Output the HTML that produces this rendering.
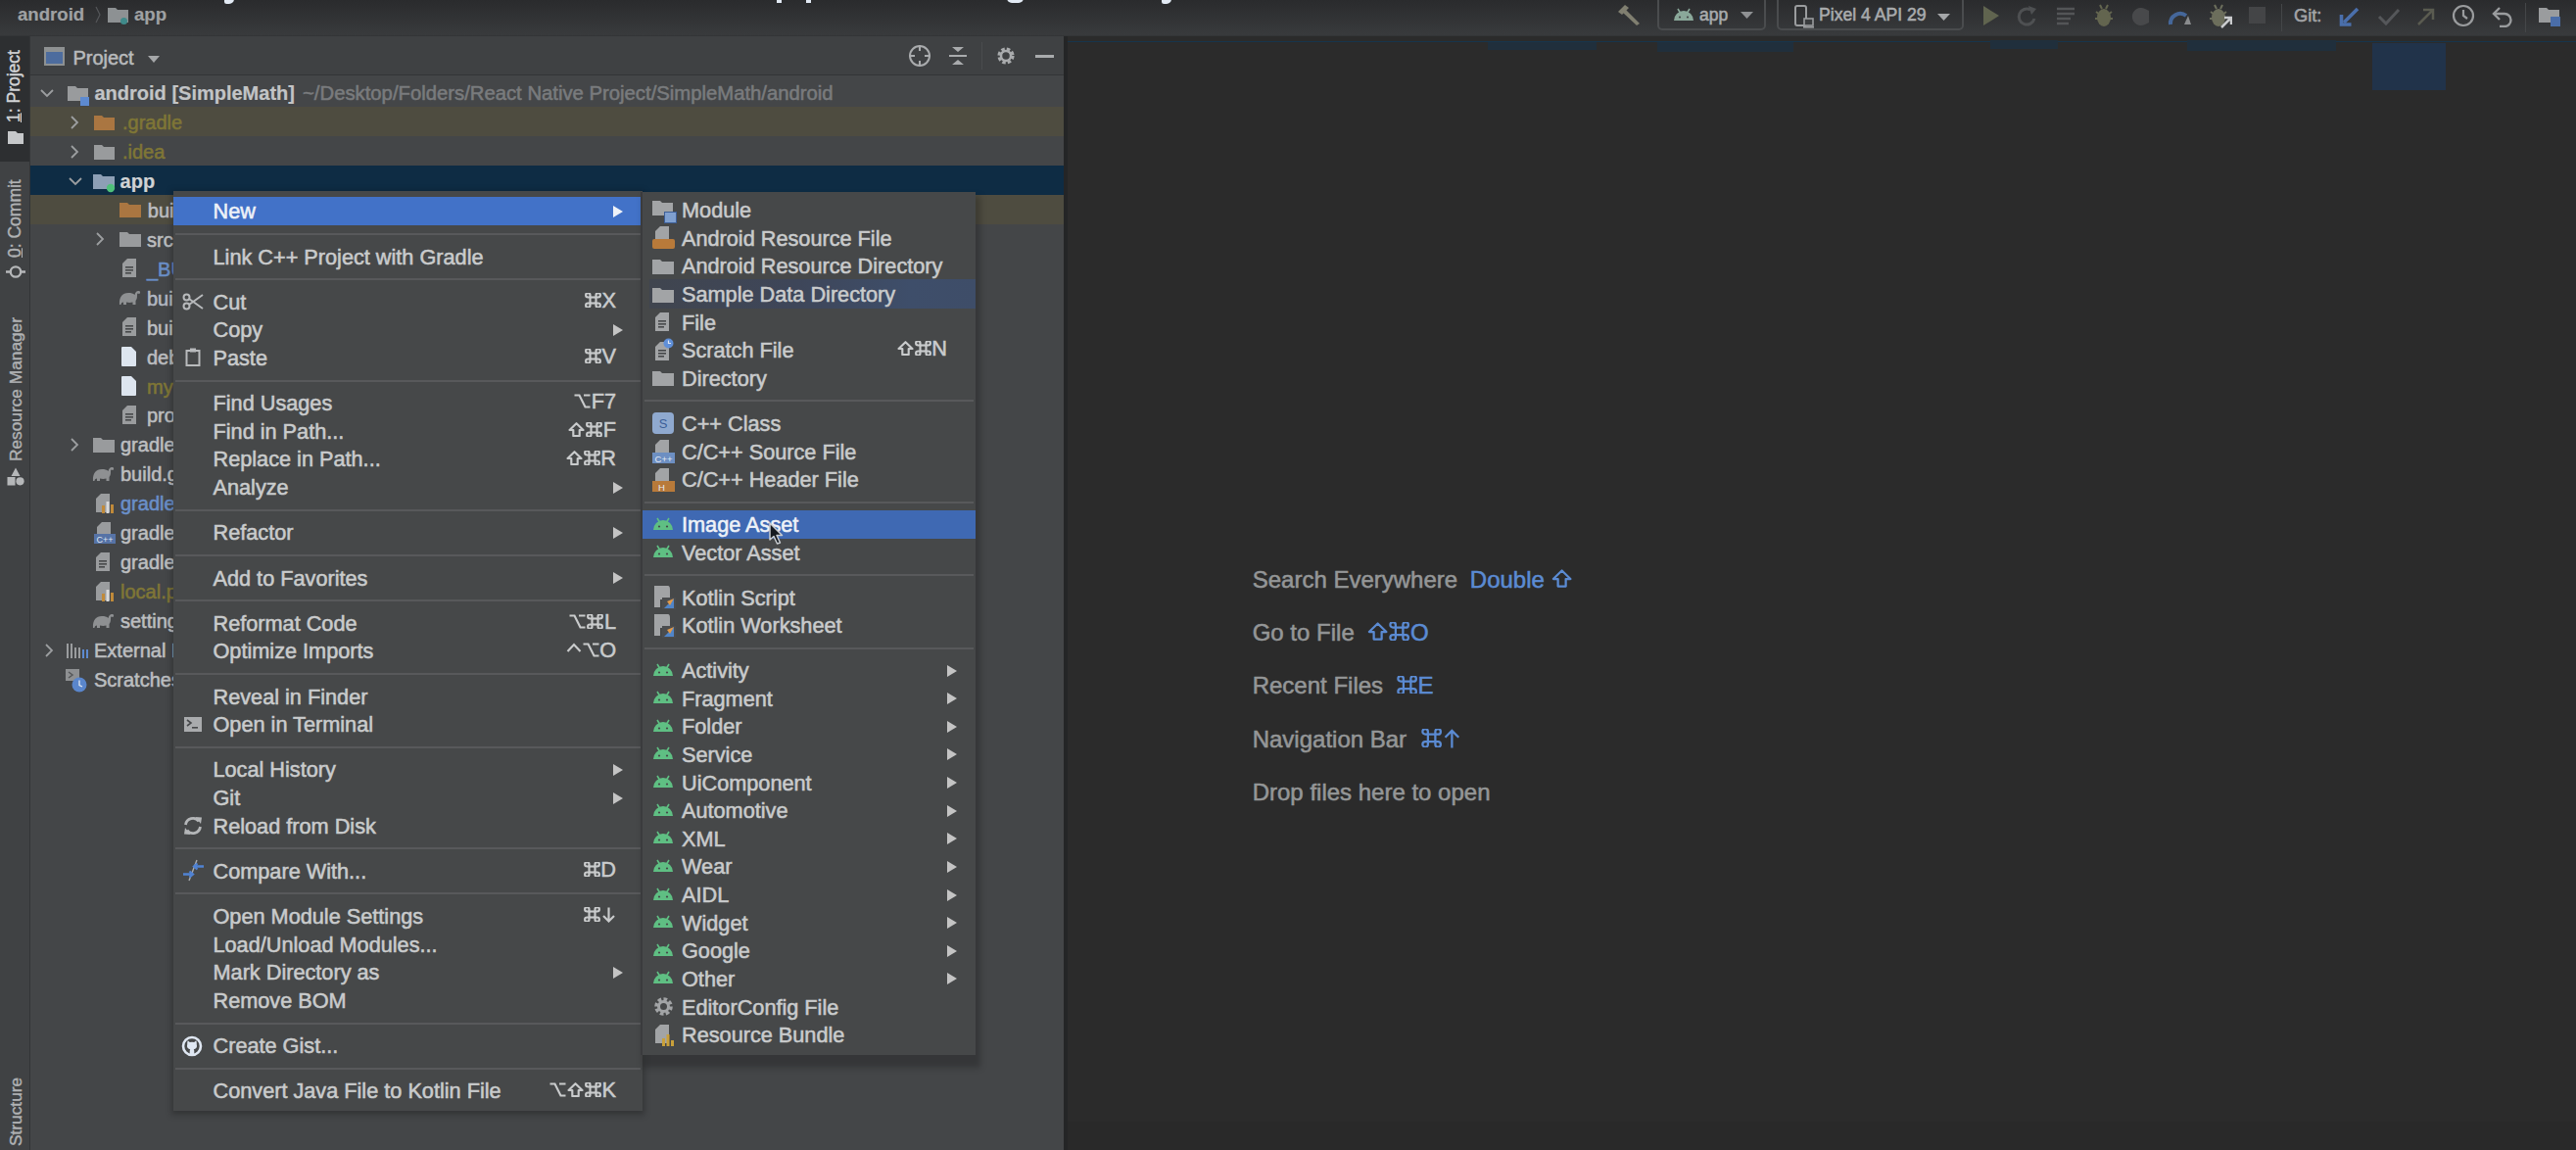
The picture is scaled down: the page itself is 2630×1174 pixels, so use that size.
<!DOCTYPE html>
<html><head><meta charset="utf-8"><style>
html,body{margin:0;padding:0;width:2630px;height:1174px;overflow:hidden;background:#2b2b2b}
body{position:relative;font-family:"Liberation Sans", sans-serif}
</style></head><body>
<div style="position:absolute;left:0;top:0;width:2630px;height:1174px;background:#2b2b2b"></div><div style="position:absolute;left:0px;top:0px;width:2630px;height:37px;background:linear-gradient(#2a2b2d,#393b3d);"></div><div style="position:absolute;left:0px;top:36px;width:2630px;height:1px;background:#333537;"></div><div style="position:absolute;left:229px;top:-1px;width:9.5px;height:4.5px;background:#e2eaf4;border-radius:0 0 6px 3px"></div><div style="position:absolute;left:792.5px;top:0px;width:5.7px;height:3px;background:#e2eaf4;"></div><div style="position:absolute;left:822.5px;top:0px;width:5.5px;height:3px;background:#e2eaf4;"></div><div style="position:absolute;left:1028px;top:-2px;width:17px;height:5px;background:#e2eaf4;border-radius:0 0 9px 9px"></div><div style="position:absolute;left:1186px;top:-1px;width:9.5px;height:4.5px;background:#e2eaf4;border-radius:0 0 6px 3px"></div><div style="position:absolute;left:18px;top:6.03px;font-size:18.6px;line-height:18.6px;color:#9fa1a3;font-weight:bold;white-space:pre;-webkit-text-stroke:0.2px #9fa1a3;">android</div><svg style="position:absolute;left:96px;top:6px;" width="8" height="18" viewBox="0 0 8 18"><path d="M2 1 L6 9 L2 17" stroke="#55575a" stroke-width="1.2" fill="none"/></svg><svg style="position:absolute;left:110px;top:7px;" width="21" height="16" viewBox="0 0 21 16"><path d="M0 1 H8 L10 3 H21 V16 H0 Z" fill="#8d9193"/></svg><svg style="position:absolute;left:122px;top:17px;" width="9" height="9" viewBox="0 0 9 9"><circle cx="4.5" cy="4.5" r="3.5" fill="#3f8a8a"/></svg><div style="position:absolute;left:137px;top:6.03px;font-size:18.6px;line-height:18.6px;color:#9fa1a3;font-weight:bold;white-space:pre;-webkit-text-stroke:0.2px #9fa1a3;">app</div><div style="position:absolute;left:0px;top:37px;width:30px;height:1137px;background:#404244;"></div><div style="position:absolute;left:0px;top:37px;width:30px;height:128px;background:#2d2f31;"></div><div style="position:absolute;left:30px;top:37px;width:1px;height:1137px;background:#333537;"></div><div style="position:absolute;left:6px;top:125px;transform-origin:0 0;transform:rotate(-90deg);font-size:17.5px;line-height:17.5px;color:#d2d4d6;font-weight:normal;white-space:pre;-webkit-text-stroke:0.4px #d2d4d6"><u>1</u>: Project</div><svg style="position:absolute;left:8px;top:133px;" width="16" height="14" viewBox="0 0 16 14"><path d="M0 1 H8 L10 3 H16 V14 H0 Z" fill="#c6c8ca"/></svg><div style="position:absolute;left:7px;top:263px;transform-origin:0 0;transform:rotate(-90deg);font-size:17.5px;line-height:17.5px;color:#b0b2b4;font-weight:normal;white-space:pre;-webkit-text-stroke:0.4px #b0b2b4"><u>0</u>: Commit</div><svg style="position:absolute;left:5px;top:270px;" width="22" height="15" viewBox="0 0 22 15"><circle cx="11" cy="7.5" r="5.2" stroke="#b5b7b9" stroke-width="2.3" fill="none"/><path d="M1 7.5 H5.5 M16.5 7.5 H21" stroke="#b5b7b9" stroke-width="2.6"/></svg><div style="position:absolute;left:7.5px;top:470.5px;transform-origin:0 0;transform:rotate(-90deg);font-size:17.3px;line-height:17.3px;color:#b0b2b4;font-weight:normal;white-space:pre;-webkit-text-stroke:0.4px #b0b2b4">Resource Manager</div><svg style="position:absolute;left:7px;top:477px;" width="18" height="19" viewBox="0 0 18 19"><path d="M9 0.5 L13.5 9 H4.5 Z" fill="#b5b7b9"/><rect x="0.5" y="10" width="8" height="8.5" fill="#b5b7b9"/><circle cx="13.5" cy="14.3" r="4.1" fill="#b5b7b9"/></svg><div style="position:absolute;left:7.5px;top:1170px;transform-origin:0 0;transform:rotate(-90deg);font-size:17.3px;line-height:17.3px;color:#b0b2b4;font-weight:normal;white-space:pre;-webkit-text-stroke:0.4px #b0b2b4">Structure</div><div style="position:absolute;left:31px;top:37px;width:1056px;height:1137px;background:#444648;"></div><div style="position:absolute;left:31px;top:37px;width:1056px;height:39px;background:#3f4143;"></div><div style="position:absolute;left:31px;top:76px;width:1056px;height:1px;background:#333537;"></div><svg style="position:absolute;left:45px;top:48px;" width="21" height="19" viewBox="0 0 21 19"><rect x="1" y="1" width="19" height="17" fill="#4d6c9e" stroke="#8e9192" stroke-width="2"/><rect x="1" y="1" width="19" height="4" fill="#8e9192"/></svg><div style="position:absolute;left:74.4px;top:48.55px;font-size:20px;line-height:20px;color:#b8babc;font-weight:normal;white-space:pre;-webkit-text-stroke:0.55px #b8babc;">Project</div><svg style="position:absolute;left:151px;top:57px;" width="12" height="7" viewBox="0 0 12 7"><path d="M0 0 H12 L6 7 Z" fill="#a5a7a9"/></svg><svg style="position:absolute;left:927px;top:45px;" width="24" height="24" viewBox="0 0 24 24"><circle cx="12" cy="12" r="10" stroke="#a9abad" stroke-width="2" fill="none"/><path d="M12 1 V7 M12 17 V23 M1 12 H7 M17 12 H23" stroke="#a9abad" stroke-width="2"/></svg><svg style="position:absolute;left:968px;top:47px;" width="20" height="20" viewBox="0 0 20 20"><path d="M4 1 H16 L10 6 Z M4 19 H16 L10 14 Z" fill="#a9abad"/><rect x="1" y="9" width="18" height="2" fill="#a9abad"/></svg><div style="position:absolute;left:1002px;top:43px;width:1px;height:28px;background:#4a4c4e;"></div><svg style="position:absolute;left:1017px;top:47px;" width="20" height="20" viewBox="0 0 20 20"><circle cx="10" cy="10" r="6.5" fill="none" stroke="#a9abad" stroke-width="4.2" stroke-dasharray="3.2 1.9"/><circle cx="10" cy="10" r="5" fill="none" stroke="#a9abad" stroke-width="2.5"/></svg><div style="position:absolute;left:1057px;top:56px;width:19px;height:2.5px;background:#a9abad;"></div><div style="position:absolute;left:31px;top:108.85000000000001px;width:1055px;height:29.95px;background:#4e4c40;"></div><div style="position:absolute;left:31px;top:168.75px;width:1056px;height:29.95px;background:#0e2c44;"></div><div style="position:absolute;left:31px;top:198.7px;width:1056px;height:29.95px;background:#4e4c40;"></div><svg style="position:absolute;left:41px;top:89.675px;" width="14" height="10" viewBox="0 0 14 10"><path d="M1 2 L7 8 L13 2" stroke="#9c9ea0" stroke-width="1.8" fill="none"/></svg><svg style="position:absolute;left:69px;top:86.675px;" width="21" height="16" viewBox="0 0 21 16"><path d="M0 1 H8 L10 3 H21 V16 H0 Z" fill="#999b9d"/></svg><div style="position:absolute;left:82px;top:98.675px;width:9px;height:9px;background:#5d8ad0;"></div><div style="position:absolute;left:96.5px;top:85.03px;font-size:20px;line-height:20px;color:#c2c4c6;font-weight:bold;white-space:pre;-webkit-text-stroke:0.2px #c2c4c6;">android [SimpleMath]</div><div style="position:absolute;left:309px;top:84.89px;font-size:20.3px;line-height:20.3px;color:#797b7d;font-weight:normal;white-space:pre;-webkit-text-stroke:0.55px #797b7d;">~/Desktop/Folders/React Native Project/SimpleMath/android</div><svg style="position:absolute;left:71px;top:117.625px;" width="10" height="14" viewBox="0 0 10 14"><path d="M2 1 L8 7 L2 13" stroke="#9c9ea0" stroke-width="1.8" fill="none"/></svg><svg style="position:absolute;left:96px;top:116.625px;" width="21" height="16" viewBox="0 0 21 16"><path d="M0 1 H8 L10 3 H21 V16 H0 Z" fill="#aa7641"/></svg><div style="position:absolute;left:125px;top:114.98px;font-size:20px;line-height:20px;color:#7f7636;font-weight:normal;white-space:pre;-webkit-text-stroke:0.55px #7f7636;">.gradle</div><svg style="position:absolute;left:71px;top:147.57500000000002px;" width="10" height="14" viewBox="0 0 10 14"><path d="M2 1 L8 7 L2 13" stroke="#9c9ea0" stroke-width="1.8" fill="none"/></svg><svg style="position:absolute;left:96px;top:146.57500000000002px;" width="21" height="16" viewBox="0 0 21 16"><path d="M0 1 H8 L10 3 H21 V16 H0 Z" fill="#999b9d"/></svg><div style="position:absolute;left:125px;top:144.94px;font-size:20px;line-height:20px;color:#7f7636;font-weight:normal;white-space:pre;-webkit-text-stroke:0.55px #7f7636;">.idea</div><svg style="position:absolute;left:70px;top:179.525px;" width="14" height="10" viewBox="0 0 14 10"><path d="M1 2 L7 8 L13 2" stroke="#9c9ea0" stroke-width="1.8" fill="none"/></svg><svg style="position:absolute;left:95px;top:176.525px;" width="22" height="16" viewBox="0 0 22 16"><path d="M0 1 H8 L10 3 H22 V16 H0 Z" fill="#8d9fb5"/></svg><svg style="position:absolute;left:108px;top:186.525px;" width="10" height="10" viewBox="0 0 10 10"><circle cx="5" cy="5" r="4.2" fill="#4fc07a"/></svg><div style="position:absolute;left:122.6px;top:174.89px;font-size:20px;line-height:20px;color:#d0d2d4;font-weight:bold;white-space:pre;-webkit-text-stroke:0.2px #d0d2d4;">app</div><svg style="position:absolute;left:122px;top:206.475px;" width="22" height="16" viewBox="0 0 22 16"><path d="M0 1 H8 L10 3 H22 V16 H0 Z" fill="#aa7641"/></svg><div style="position:absolute;left:150.8px;top:204.84px;font-size:20px;line-height:20px;color:#bcbec0;font-weight:normal;white-space:pre;-webkit-text-stroke:0.55px #bcbec0;">build</div><svg style="position:absolute;left:97px;top:237.425px;" width="10" height="14" viewBox="0 0 10 14"><path d="M2 1 L8 7 L2 13" stroke="#9c9ea0" stroke-width="1.8" fill="none"/></svg><svg style="position:absolute;left:122px;top:236.425px;" width="22" height="16" viewBox="0 0 22 16"><path d="M0 1 H8 L10 3 H22 V16 H0 Z" fill="#999b9d"/></svg><div style="position:absolute;left:150px;top:234.79px;font-size:20px;line-height:20px;color:#bcbec0;font-weight:normal;white-space:pre;-webkit-text-stroke:0.55px #bcbec0;">src</div><svg style="position:absolute;left:125px;top:264.37500000000006px;" width="14" height="19" viewBox="0 0 14 19"><path d="M0 5 L5 0 H14 V19 H0 Z" fill="#9a9c9e"/><rect x="3" y="8" width="8" height="1.6" fill="#46484a"/><rect x="3" y="11" width="8" height="1.6" fill="#46484a"/><rect x="3" y="14" width="6" height="1.6" fill="#46484a"/></svg><div style="position:absolute;left:150px;top:264.74px;font-size:20px;line-height:20px;color:#6a8fc8;font-weight:normal;white-space:pre;-webkit-text-stroke:0.55px #6a8fc8;">_BUCK</div><svg style="position:absolute;left:121px;top:296.32500000000005px;" width="23" height="16" viewBox="0 0 23 16"><path d="M1 15 C0.5 7 4 3 10 3 C13 3 15 3.5 16.5 5 C17 2.5 18.5 0.5 21 1 C22.5 1.5 22.5 3.5 21 4 C20 3 19 3.2 19 5 C19.2 8 18.5 10 17.5 11 L17.5 15 H14.5 V12.5 C12.5 13 10 13 8 12.5 V15 H5 V12.5 C3.5 12.5 2.5 13.5 2.5 15 Z" fill="#8e9092"/></svg><div style="position:absolute;left:150px;top:294.69px;font-size:20px;line-height:20px;color:#b2b8c2;font-weight:normal;white-space:pre;-webkit-text-stroke:0.55px #b2b8c2;">build.gradle</div><svg style="position:absolute;left:125px;top:324.27500000000003px;" width="14" height="19" viewBox="0 0 14 19"><path d="M0 5 L5 0 H14 V19 H0 Z" fill="#9a9c9e"/><rect x="3" y="8" width="8" height="1.6" fill="#46484a"/><rect x="3" y="11" width="8" height="1.6" fill="#46484a"/><rect x="3" y="14" width="6" height="1.6" fill="#46484a"/></svg><div style="position:absolute;left:150px;top:324.63px;font-size:20px;line-height:20px;color:#bcbec0;font-weight:normal;white-space:pre;-webkit-text-stroke:0.55px #bcbec0;">build_defs.bzl</div><svg style="position:absolute;left:124px;top:354.2250000000001px;" width="15" height="20" viewBox="0 0 15 20"><path d="M1 0 H10 L15 5 V19 Q15 20 14 20 H1 Q0 20 0 19 V1 Q0 0 1 0 Z" fill="#dde5ef"/></svg><div style="position:absolute;left:150px;top:354.59px;font-size:20px;line-height:20px;color:#bcbec0;font-weight:normal;white-space:pre;-webkit-text-stroke:0.55px #bcbec0;">debug.keystore</div><svg style="position:absolute;left:124px;top:384.175px;" width="15" height="20" viewBox="0 0 15 20"><path d="M1 0 H10 L15 5 V19 Q15 20 14 20 H1 Q0 20 0 19 V1 Q0 0 1 0 Z" fill="#dde5ef"/></svg><div style="position:absolute;left:150px;top:384.53px;font-size:20px;line-height:20px;color:#7f7636;font-weight:normal;white-space:pre;-webkit-text-stroke:0.55px #7f7636;">my-upload-key</div><svg style="position:absolute;left:125px;top:414.12500000000006px;" width="14" height="19" viewBox="0 0 14 19"><path d="M0 5 L5 0 H14 V19 H0 Z" fill="#9a9c9e"/><rect x="3" y="8" width="8" height="1.6" fill="#46484a"/><rect x="3" y="11" width="8" height="1.6" fill="#46484a"/><rect x="3" y="14" width="6" height="1.6" fill="#46484a"/></svg><div style="position:absolute;left:150px;top:414.49px;font-size:20px;line-height:20px;color:#bcbec0;font-weight:normal;white-space:pre;-webkit-text-stroke:0.55px #bcbec0;">proguard-rules.pro</div><svg style="position:absolute;left:71px;top:447.075px;" width="10" height="14" viewBox="0 0 10 14"><path d="M2 1 L8 7 L2 13" stroke="#9c9ea0" stroke-width="1.8" fill="none"/></svg><svg style="position:absolute;left:95px;top:446.075px;" width="22" height="16" viewBox="0 0 22 16"><path d="M0 1 H8 L10 3 H22 V16 H0 Z" fill="#999b9d"/></svg><div style="position:absolute;left:123px;top:444.43px;font-size:20px;line-height:20px;color:#bcbec0;font-weight:normal;white-space:pre;-webkit-text-stroke:0.55px #bcbec0;">gradle</div><svg style="position:absolute;left:94px;top:476.02500000000003px;" width="23" height="16" viewBox="0 0 23 16"><path d="M1 15 C0.5 7 4 3 10 3 C13 3 15 3.5 16.5 5 C17 2.5 18.5 0.5 21 1 C22.5 1.5 22.5 3.5 21 4 C20 3 19 3.2 19 5 C19.2 8 18.5 10 17.5 11 L17.5 15 H14.5 V12.5 C12.5 13 10 13 8 12.5 V15 H5 V12.5 C3.5 12.5 2.5 13.5 2.5 15 Z" fill="#8e9092"/></svg><div style="position:absolute;left:123px;top:474.38px;font-size:20px;line-height:20px;color:#bcbec0;font-weight:normal;white-space:pre;-webkit-text-stroke:0.55px #bcbec0;">build.gradle</div><svg style="position:absolute;left:98px;top:503.975px;" width="14" height="19" viewBox="0 0 14 19"><path d="M0 5 L5 0 H14 V19 H0 Z" fill="#9a9c9e"/></svg><svg style="position:absolute;left:104px;top:511.975px;" width="13" height="12" viewBox="0 0 13 12"><rect x="0" y="4" width="3" height="8" fill="#c08a3a"/><rect x="4.5" y="0" width="3" height="12" fill="#d9d9d9"/><rect x="9" y="3" width="3" height="9" fill="#c08a3a"/></svg><div style="position:absolute;left:123px;top:504.33px;font-size:20px;line-height:20px;color:#6a8fc8;font-weight:normal;white-space:pre;-webkit-text-stroke:0.55px #6a8fc8;">gradle.properties</div><svg style="position:absolute;left:99px;top:532.925px;" width="14" height="19" viewBox="0 0 14 19"><path d="M0 5 L5 0 H14 V19 H0 Z" fill="#9a9c9e"/></svg><svg style="position:absolute;left:96px;top:544.925px;" width="22" height="10" viewBox="0 0 22 10"><rect width="22" height="10" fill="#5673a6"/><text x="11" y="8.5" font-size="9" text-anchor="middle" fill="#dfe6f0" font-family="Liberation Sans">C++</text></svg><div style="position:absolute;left:123px;top:534.28px;font-size:20px;line-height:20px;color:#bcbec0;font-weight:normal;white-space:pre;-webkit-text-stroke:0.55px #bcbec0;">gradlew</div><svg style="position:absolute;left:98px;top:563.875px;" width="14" height="19" viewBox="0 0 14 19"><path d="M0 5 L5 0 H14 V19 H0 Z" fill="#9a9c9e"/><rect x="3" y="8" width="8" height="1.6" fill="#46484a"/><rect x="3" y="11" width="8" height="1.6" fill="#46484a"/><rect x="3" y="14" width="6" height="1.6" fill="#46484a"/></svg><div style="position:absolute;left:123px;top:564.24px;font-size:20px;line-height:20px;color:#bcbec0;font-weight:normal;white-space:pre;-webkit-text-stroke:0.55px #bcbec0;">gradlew.bat</div><svg style="position:absolute;left:98px;top:593.8249999999999px;" width="14" height="19" viewBox="0 0 14 19"><path d="M0 5 L5 0 H14 V19 H0 Z" fill="#9a9c9e"/></svg><svg style="position:absolute;left:104px;top:601.8249999999999px;" width="13" height="12" viewBox="0 0 13 12"><rect x="0" y="4" width="3" height="8" fill="#c08a3a"/><rect x="4.5" y="0" width="3" height="12" fill="#d9d9d9"/><rect x="9" y="3" width="3" height="9" fill="#c08a3a"/></svg><div style="position:absolute;left:123px;top:594.18px;font-size:20px;line-height:20px;color:#7f7636;font-weight:normal;white-space:pre;-webkit-text-stroke:0.55px #7f7636;">local.properties</div><svg style="position:absolute;left:94px;top:625.775px;" width="23" height="16" viewBox="0 0 23 16"><path d="M1 15 C0.5 7 4 3 10 3 C13 3 15 3.5 16.5 5 C17 2.5 18.5 0.5 21 1 C22.5 1.5 22.5 3.5 21 4 C20 3 19 3.2 19 5 C19.2 8 18.5 10 17.5 11 L17.5 15 H14.5 V12.5 C12.5 13 10 13 8 12.5 V15 H5 V12.5 C3.5 12.5 2.5 13.5 2.5 15 Z" fill="#8e9092"/></svg><div style="position:absolute;left:123px;top:624.13px;font-size:20px;line-height:20px;color:#bcbec0;font-weight:normal;white-space:pre;-webkit-text-stroke:0.55px #bcbec0;">settings.gradle</div><svg style="position:absolute;left:45px;top:656.7249999999999px;" width="10" height="14" viewBox="0 0 10 14"><path d="M2 1 L8 7 L2 13" stroke="#9c9ea0" stroke-width="1.8" fill="none"/></svg><svg style="position:absolute;left:68px;top:654.7249999999999px;" width="22" height="18" viewBox="0 0 22 18"><path d="M1 2 V17 M5 2 V17 M9 6 V17 M13 6 V17 M17 8 V17 M21 8 V17" stroke="#9a9c9e" stroke-width="2"/><path d="M17 8 V17 M21 8 V17" stroke="#5d8ad0" stroke-width="2"/></svg><div style="position:absolute;left:96px;top:654.08px;font-size:20px;line-height:20px;color:#bcbec0;font-weight:normal;white-space:pre;-webkit-text-stroke:0.55px #bcbec0;">External Libraries</div><svg style="position:absolute;left:66px;top:681.675px;" width="26" height="26" viewBox="0 0 26 26"><path d="M1 1 H15 V13 H1 Z" fill="#8e9092"/><path d="M4 4 L8 7 L4 10" stroke="#555759" stroke-width="1.5" fill="none"/><circle cx="15" cy="17" r="7.5" fill="#5a86cc"/><path d="M15 12.5 V17.5 L18 19" stroke="#dfe7f2" stroke-width="1.3" fill="none"/></svg><div style="position:absolute;left:96px;top:684.03px;font-size:20px;line-height:20px;color:#bcbec0;font-weight:normal;white-space:pre;-webkit-text-stroke:0.55px #bcbec0;">Scratches and Consoles</div><div style="position:absolute;left:1087px;top:37px;width:1543px;height:1137px;background:#2b2b2b;"></div><div style="position:absolute;left:1087px;top:41.5px;width:1543px;height:1.5px;background:#17354c;"></div><div style="position:absolute;left:1519px;top:43px;width:111px;height:8px;background:#202f3c;"></div><div style="position:absolute;left:1692px;top:43px;width:139px;height:10px;background:#202f3c;"></div><div style="position:absolute;left:2032px;top:41px;width:69px;height:9px;background:#202f3c;"></div><div style="position:absolute;left:2233px;top:41px;width:152px;height:11px;background:#202f3c;"></div><div style="position:absolute;left:2422px;top:43.5px;width:74.5px;height:48.5px;background:#21334a;"></div><div style="position:absolute;left:1086px;top:37px;width:4px;height:1137px;background:#242526;"></div><div style="position:absolute;left:1090px;top:1145px;width:1540px;height:29px;background:#292929;"></div><div style="position:absolute;left:1278.7px;top:580.18px;font-size:24px;line-height:24px;color:#949697;font-weight:normal;white-space:pre;-webkit-text-stroke:0.55px #949697;">Search Everywhere</div><div style="position:absolute;left:1500.8px;top:580.18px;font-size:24px;line-height:24px;color:#5b8bd3;font-weight:normal;white-space:pre;-webkit-text-stroke:0.55px #5b8bd3;">Double <svg width="21.25" height="18.75" viewBox="0 0 17 15" style="display:inline-block;vertical-align:0;margin:0 0.625px"><path d="M8.5 1.2 L15.5 8 H11.7 V14 H5.3 V8 H1.5 Z" stroke="#5b8bd3" stroke-width="1.8" fill="none" stroke-linejoin="round"/></svg></div><div style="position:absolute;left:1278.7px;top:634.08px;font-size:24px;line-height:24px;color:#949697;font-weight:normal;white-space:pre;-webkit-text-stroke:0.55px #949697;">Go to File</div><div style="position:absolute;left:1395px;top:634.08px;font-size:24px;line-height:24px;color:#5b8bd3;font-weight:normal;white-space:pre;-webkit-text-stroke:0.55px #5b8bd3;"><svg width="21.25" height="18.75" viewBox="0 0 17 15" style="display:inline-block;vertical-align:0;margin:0 0.625px"><path d="M8.5 1.2 L15.5 8 H11.7 V14 H5.3 V8 H1.5 Z" stroke="#5b8bd3" stroke-width="1.8" fill="none" stroke-linejoin="round"/></svg><svg width="21.25" height="18.75" viewBox="0 0 17 15" style="display:inline-block;vertical-align:0;margin:0 0.625px"><g stroke="#5b8bd3" stroke-width="1.8" fill="none"><rect x="5.5" y="4.5" width="6" height="6"/><path d="M5.5 4.5 H3.3 A2.2 2.2 0 1 1 5.5 2.3 Z M11.5 4.5 V2.3 A2.2 2.2 0 1 1 13.7 4.5 Z M11.5 10.5 H13.7 A2.2 2.2 0 1 1 11.5 12.7 Z M5.5 10.5 V12.7 A2.2 2.2 0 1 1 3.3 10.5 Z"/></g></svg>O</div><div style="position:absolute;left:1278.7px;top:688.38px;font-size:24px;line-height:24px;color:#949697;font-weight:normal;white-space:pre;-webkit-text-stroke:0.55px #949697;">Recent Files</div><div style="position:absolute;left:1425px;top:688.38px;font-size:24px;line-height:24px;color:#5b8bd3;font-weight:normal;white-space:pre;-webkit-text-stroke:0.55px #5b8bd3;"><svg width="21.25" height="18.75" viewBox="0 0 17 15" style="display:inline-block;vertical-align:0;margin:0 0.625px"><g stroke="#5b8bd3" stroke-width="1.8" fill="none"><rect x="5.5" y="4.5" width="6" height="6"/><path d="M5.5 4.5 H3.3 A2.2 2.2 0 1 1 5.5 2.3 Z M11.5 4.5 V2.3 A2.2 2.2 0 1 1 13.7 4.5 Z M11.5 10.5 H13.7 A2.2 2.2 0 1 1 11.5 12.7 Z M5.5 10.5 V12.7 A2.2 2.2 0 1 1 3.3 10.5 Z"/></g></svg>E</div><div style="position:absolute;left:1278.7px;top:742.58px;font-size:24px;line-height:24px;color:#949697;font-weight:normal;white-space:pre;-webkit-text-stroke:0.55px #949697;">Navigation Bar</div><div style="position:absolute;left:1450px;top:742.58px;font-size:24px;line-height:24px;color:#5b8bd3;font-weight:normal;white-space:pre;-webkit-text-stroke:0.55px #5b8bd3;"><svg width="21.25" height="18.75" viewBox="0 0 17 15" style="display:inline-block;vertical-align:0;margin:0 0.625px"><g stroke="#5b8bd3" stroke-width="1.8" fill="none"><rect x="5.5" y="4.5" width="6" height="6"/><path d="M5.5 4.5 H3.3 A2.2 2.2 0 1 1 5.5 2.3 Z M11.5 4.5 V2.3 A2.2 2.2 0 1 1 13.7 4.5 Z M11.5 10.5 H13.7 A2.2 2.2 0 1 1 11.5 12.7 Z M5.5 10.5 V12.7 A2.2 2.2 0 1 1 3.3 10.5 Z"/></g></svg><svg width="18.75" height="20.0" viewBox="0 0 15 16" style="display:inline-block;vertical-align:-1.25px;margin:0 0.625px"><path d="M7.5 15.5 V1.5 M2 7 L7.5 1.5 L13 7" stroke="#5b8bd3" stroke-width="1.8" fill="none"/></svg></div><div style="position:absolute;left:1278.7px;top:796.98px;font-size:24px;line-height:24px;color:#949697;font-weight:normal;white-space:pre;-webkit-text-stroke:0.55px #949697;">Drop files here to open</div><div style="position:absolute;left:175px;top:195px;width:483px;height:943px;background:rgba(0,0,0,0.25);filter:blur(3px)"></div><div style="position:absolute;left:177px;top:195px;width:479px;height:939px;background:#464849;"></div><div style="position:absolute;left:177px;top:200.7px;width:477.5px;height:29.42px;background:#4272c8;"></div><div style="position:absolute;left:217.5px;top:205.35px;font-size:21.7px;line-height:21.7px;color:#eef2f8;font-weight:normal;white-space:pre;-webkit-text-stroke:0.55px #eef2f8;">New</div><svg style="position:absolute;left:626px;top:209.81px;" width="10" height="12" viewBox="0 0 10 12"><path d="M0 0 L10 6 L0 12 Z" fill="#eef2f8"/></svg><div style="position:absolute;left:179px;top:237.92000000000002px;width:475px;height:2px;background:#58595b;"></div><div style="position:absolute;left:217.5px;top:251.57px;font-size:21.7px;line-height:21.7px;color:#c9cbcc;font-weight:normal;white-space:pre;-webkit-text-stroke:0.55px #c9cbcc;">Link C++ Project with Gradle</div><div style="position:absolute;left:179px;top:284.14px;width:475px;height:2px;background:#58595b;"></div><div style="position:absolute;left:217.5px;top:297.79px;font-size:21.7px;line-height:21.7px;color:#c9cbcc;font-weight:normal;white-space:pre;-webkit-text-stroke:0.55px #c9cbcc;">Cut</div><div style="position:absolute;left:429px;width:200px;top:295.9px;text-align:right;font-size:21.7px;line-height:21.7px;color:#c9cbcc;white-space:pre;-webkit-text-stroke:0.55px #c9cbcc"><svg width="17.0" height="15.0" viewBox="0 0 17 15" style="display:inline-block;vertical-align:0;margin:0 0.5px"><g stroke="#c9cbcc" stroke-width="2.15" fill="none"><rect x="5.5" y="4.5" width="6" height="6"/><path d="M5.5 4.5 H3.3 A2.2 2.2 0 1 1 5.5 2.3 Z M11.5 4.5 V2.3 A2.2 2.2 0 1 1 13.7 4.5 Z M11.5 10.5 H13.7 A2.2 2.2 0 1 1 11.5 12.7 Z M5.5 10.5 V12.7 A2.2 2.2 0 1 1 3.3 10.5 Z"/></g></svg>X</div><svg style="position:absolute;left:186px;top:299.25px;" width="22" height="18" viewBox="0 0 22 18"><circle cx="4.5" cy="4.5" r="3" stroke="#b8babc" stroke-width="2" fill="none"/><circle cx="4.5" cy="13.5" r="3" stroke="#b8babc" stroke-width="2" fill="none"/><path d="M7 6 L21 16 M7 12 L21 2" stroke="#b8babc" stroke-width="2"/></svg><div style="position:absolute;left:217.5px;top:326.41px;font-size:21.7px;line-height:21.7px;color:#c9cbcc;font-weight:normal;white-space:pre;-webkit-text-stroke:0.55px #c9cbcc;">Copy</div><svg style="position:absolute;left:626px;top:330.87px;" width="10" height="12" viewBox="0 0 10 12"><path d="M0 0 L10 6 L0 12 Z" fill="#c4c4c4"/></svg><div style="position:absolute;left:217.5px;top:355.03px;font-size:21.7px;line-height:21.7px;color:#c9cbcc;font-weight:normal;white-space:pre;-webkit-text-stroke:0.55px #c9cbcc;">Paste</div><div style="position:absolute;left:429px;width:200px;top:353.14px;text-align:right;font-size:21.7px;line-height:21.7px;color:#c9cbcc;white-space:pre;-webkit-text-stroke:0.55px #c9cbcc"><svg width="17.0" height="15.0" viewBox="0 0 17 15" style="display:inline-block;vertical-align:0;margin:0 0.5px"><g stroke="#c9cbcc" stroke-width="2.15" fill="none"><rect x="5.5" y="4.5" width="6" height="6"/><path d="M5.5 4.5 H3.3 A2.2 2.2 0 1 1 5.5 2.3 Z M11.5 4.5 V2.3 A2.2 2.2 0 1 1 13.7 4.5 Z M11.5 10.5 H13.7 A2.2 2.2 0 1 1 11.5 12.7 Z M5.5 10.5 V12.7 A2.2 2.2 0 1 1 3.3 10.5 Z"/></g></svg>V</div><svg style="position:absolute;left:189px;top:355.49px;" width="16" height="19" viewBox="0 0 16 19"><rect x="1.5" y="3" width="13" height="15" stroke="#b8babc" stroke-width="2" fill="none"/><rect x="5" y="0.5" width="6" height="4" fill="#b8babc"/></svg><div style="position:absolute;left:179px;top:387.6px;width:475px;height:2px;background:#58595b;"></div><div style="position:absolute;left:217.5px;top:401.25px;font-size:21.7px;line-height:21.7px;color:#c9cbcc;font-weight:normal;white-space:pre;-webkit-text-stroke:0.55px #c9cbcc;">Find Usages</div><div style="position:absolute;left:429px;width:200px;top:399.36px;text-align:right;font-size:21.7px;line-height:21.7px;color:#c9cbcc;white-space:pre;-webkit-text-stroke:0.55px #c9cbcc"><svg width="17.0" height="15.0" viewBox="0 0 17 15" style="display:inline-block;vertical-align:0;margin:0 0.5px"><path d="M0.5 1.5 H5.5 L11.5 13.5 H16.5 M10 1.5 H16.5" stroke="#c9cbcc" stroke-width="2.15" fill="none"/></svg>F7</div><div style="position:absolute;left:217.5px;top:429.87px;font-size:21.7px;line-height:21.7px;color:#c9cbcc;font-weight:normal;white-space:pre;-webkit-text-stroke:0.55px #c9cbcc;">Find in Path...</div><div style="position:absolute;left:429px;width:200px;top:427.98px;text-align:right;font-size:21.7px;line-height:21.7px;color:#c9cbcc;white-space:pre;-webkit-text-stroke:0.55px #c9cbcc"><svg width="17.0" height="15.0" viewBox="0 0 17 15" style="display:inline-block;vertical-align:0;margin:0 0.5px"><path d="M8.5 1.2 L15.5 8 H11.7 V14 H5.3 V8 H1.5 Z" stroke="#c9cbcc" stroke-width="2.15" fill="none" stroke-linejoin="round"/></svg><svg width="17.0" height="15.0" viewBox="0 0 17 15" style="display:inline-block;vertical-align:0;margin:0 0.5px"><g stroke="#c9cbcc" stroke-width="2.15" fill="none"><rect x="5.5" y="4.5" width="6" height="6"/><path d="M5.5 4.5 H3.3 A2.2 2.2 0 1 1 5.5 2.3 Z M11.5 4.5 V2.3 A2.2 2.2 0 1 1 13.7 4.5 Z M11.5 10.5 H13.7 A2.2 2.2 0 1 1 11.5 12.7 Z M5.5 10.5 V12.7 A2.2 2.2 0 1 1 3.3 10.5 Z"/></g></svg>F</div><div style="position:absolute;left:217.5px;top:458.49px;font-size:21.7px;line-height:21.7px;color:#c9cbcc;font-weight:normal;white-space:pre;-webkit-text-stroke:0.55px #c9cbcc;">Replace in Path...</div><div style="position:absolute;left:429px;width:200px;top:456.6px;text-align:right;font-size:21.7px;line-height:21.7px;color:#c9cbcc;white-space:pre;-webkit-text-stroke:0.55px #c9cbcc"><svg width="17.0" height="15.0" viewBox="0 0 17 15" style="display:inline-block;vertical-align:0;margin:0 0.5px"><path d="M8.5 1.2 L15.5 8 H11.7 V14 H5.3 V8 H1.5 Z" stroke="#c9cbcc" stroke-width="2.15" fill="none" stroke-linejoin="round"/></svg><svg width="17.0" height="15.0" viewBox="0 0 17 15" style="display:inline-block;vertical-align:0;margin:0 0.5px"><g stroke="#c9cbcc" stroke-width="2.15" fill="none"><rect x="5.5" y="4.5" width="6" height="6"/><path d="M5.5 4.5 H3.3 A2.2 2.2 0 1 1 5.5 2.3 Z M11.5 4.5 V2.3 A2.2 2.2 0 1 1 13.7 4.5 Z M11.5 10.5 H13.7 A2.2 2.2 0 1 1 11.5 12.7 Z M5.5 10.5 V12.7 A2.2 2.2 0 1 1 3.3 10.5 Z"/></g></svg>R</div><div style="position:absolute;left:217.5px;top:487.11px;font-size:21.7px;line-height:21.7px;color:#c9cbcc;font-weight:normal;white-space:pre;-webkit-text-stroke:0.55px #c9cbcc;">Analyze</div><svg style="position:absolute;left:626px;top:491.57000000000005px;" width="10" height="12" viewBox="0 0 10 12"><path d="M0 0 L10 6 L0 12 Z" fill="#c4c4c4"/></svg><div style="position:absolute;left:179px;top:519.6800000000001px;width:475px;height:2px;background:#58595b;"></div><div style="position:absolute;left:217.5px;top:533.33px;font-size:21.7px;line-height:21.7px;color:#c9cbcc;font-weight:normal;white-space:pre;-webkit-text-stroke:0.55px #c9cbcc;">Refactor</div><svg style="position:absolute;left:626px;top:537.79px;" width="10" height="12" viewBox="0 0 10 12"><path d="M0 0 L10 6 L0 12 Z" fill="#c4c4c4"/></svg><div style="position:absolute;left:179px;top:565.9px;width:475px;height:2px;background:#58595b;"></div><div style="position:absolute;left:217.5px;top:579.55px;font-size:21.7px;line-height:21.7px;color:#c9cbcc;font-weight:normal;white-space:pre;-webkit-text-stroke:0.55px #c9cbcc;">Add to Favorites</div><svg style="position:absolute;left:626px;top:584.01px;" width="10" height="12" viewBox="0 0 10 12"><path d="M0 0 L10 6 L0 12 Z" fill="#c4c4c4"/></svg><div style="position:absolute;left:179px;top:612.12px;width:475px;height:2px;background:#58595b;"></div><div style="position:absolute;left:217.5px;top:625.77px;font-size:21.7px;line-height:21.7px;color:#c9cbcc;font-weight:normal;white-space:pre;-webkit-text-stroke:0.55px #c9cbcc;">Reformat Code</div><div style="position:absolute;left:429px;width:200px;top:623.88px;text-align:right;font-size:21.7px;line-height:21.7px;color:#c9cbcc;white-space:pre;-webkit-text-stroke:0.55px #c9cbcc"><svg width="17.0" height="15.0" viewBox="0 0 17 15" style="display:inline-block;vertical-align:0;margin:0 0.5px"><path d="M0.5 1.5 H5.5 L11.5 13.5 H16.5 M10 1.5 H16.5" stroke="#c9cbcc" stroke-width="2.15" fill="none"/></svg><svg width="17.0" height="15.0" viewBox="0 0 17 15" style="display:inline-block;vertical-align:0;margin:0 0.5px"><g stroke="#c9cbcc" stroke-width="2.15" fill="none"><rect x="5.5" y="4.5" width="6" height="6"/><path d="M5.5 4.5 H3.3 A2.2 2.2 0 1 1 5.5 2.3 Z M11.5 4.5 V2.3 A2.2 2.2 0 1 1 13.7 4.5 Z M11.5 10.5 H13.7 A2.2 2.2 0 1 1 11.5 12.7 Z M5.5 10.5 V12.7 A2.2 2.2 0 1 1 3.3 10.5 Z"/></g></svg>L</div><div style="position:absolute;left:217.5px;top:654.39px;font-size:21.7px;line-height:21.7px;color:#c9cbcc;font-weight:normal;white-space:pre;-webkit-text-stroke:0.55px #c9cbcc;">Optimize Imports</div><div style="position:absolute;left:429px;width:200px;top:652.5px;text-align:right;font-size:21.7px;line-height:21.7px;color:#c9cbcc;white-space:pre;-webkit-text-stroke:0.55px #c9cbcc"><svg width="16.0" height="15.0" viewBox="0 0 16 15" style="display:inline-block;vertical-align:0;margin:0 0.5px"><path d="M1.5 9 L8 2 L14.5 9" stroke="#c9cbcc" stroke-width="2.15" fill="none"/></svg><svg width="17.0" height="15.0" viewBox="0 0 17 15" style="display:inline-block;vertical-align:0;margin:0 0.5px"><path d="M0.5 1.5 H5.5 L11.5 13.5 H16.5 M10 1.5 H16.5" stroke="#c9cbcc" stroke-width="2.15" fill="none"/></svg>O</div><div style="position:absolute;left:179px;top:686.96px;width:475px;height:2px;background:#58595b;"></div><div style="position:absolute;left:217.5px;top:700.61px;font-size:21.7px;line-height:21.7px;color:#c9cbcc;font-weight:normal;white-space:pre;-webkit-text-stroke:0.55px #c9cbcc;">Reveal in Finder</div><div style="position:absolute;left:217.5px;top:729.23px;font-size:21.7px;line-height:21.7px;color:#c9cbcc;font-weight:normal;white-space:pre;-webkit-text-stroke:0.55px #c9cbcc;">Open in Terminal</div><svg style="position:absolute;left:188px;top:731.69px;" width="18" height="15" viewBox="0 0 18 15"><rect x="0" y="0" width="18" height="15" fill="#a9abad"/><path d="M3 3 L7 6 L3 9" stroke="#46484a" stroke-width="1.6" fill="none"/><rect x="8" y="10" width="6" height="1.6" fill="#46484a"/></svg><div style="position:absolute;left:179px;top:761.8000000000001px;width:475px;height:2px;background:#58595b;"></div><div style="position:absolute;left:217.5px;top:775.45px;font-size:21.7px;line-height:21.7px;color:#c9cbcc;font-weight:normal;white-space:pre;-webkit-text-stroke:0.55px #c9cbcc;">Local History</div><svg style="position:absolute;left:626px;top:779.9100000000001px;" width="10" height="12" viewBox="0 0 10 12"><path d="M0 0 L10 6 L0 12 Z" fill="#c4c4c4"/></svg><div style="position:absolute;left:217.5px;top:804.07px;font-size:21.7px;line-height:21.7px;color:#c9cbcc;font-weight:normal;white-space:pre;-webkit-text-stroke:0.55px #c9cbcc;">Git</div><svg style="position:absolute;left:626px;top:808.5300000000001px;" width="10" height="12" viewBox="0 0 10 12"><path d="M0 0 L10 6 L0 12 Z" fill="#c4c4c4"/></svg><div style="position:absolute;left:217.5px;top:832.69px;font-size:21.7px;line-height:21.7px;color:#c9cbcc;font-weight:normal;white-space:pre;-webkit-text-stroke:0.55px #c9cbcc;">Reload from Disk</div><svg style="position:absolute;left:186px;top:832.1500000000001px;" width="22" height="22" viewBox="0 0 22 22"><path d="M3.5 10 A7.5 7.5 0 0 1 17 6.5 M18.5 12 A7.5 7.5 0 0 1 5 15.5" stroke="#b4b6b8" stroke-width="2.8" fill="none"/><path d="M13.5 2 L20 2.5 L19 9 Z M8.5 20 L2 19.5 L3 13 Z" fill="#b4b6b8"/></svg><div style="position:absolute;left:179px;top:865.2600000000001px;width:475px;height:2px;background:#58595b;"></div><div style="position:absolute;left:217.5px;top:878.91px;font-size:21.7px;line-height:21.7px;color:#c9cbcc;font-weight:normal;white-space:pre;-webkit-text-stroke:0.55px #c9cbcc;">Compare With...</div><div style="position:absolute;left:429px;width:200px;top:877.0200000000001px;text-align:right;font-size:21.7px;line-height:21.7px;color:#c9cbcc;white-space:pre;-webkit-text-stroke:0.55px #c9cbcc"><svg width="17.0" height="15.0" viewBox="0 0 17 15" style="display:inline-block;vertical-align:0;margin:0 0.5px"><g stroke="#c9cbcc" stroke-width="2.15" fill="none"><rect x="5.5" y="4.5" width="6" height="6"/><path d="M5.5 4.5 H3.3 A2.2 2.2 0 1 1 5.5 2.3 Z M11.5 4.5 V2.3 A2.2 2.2 0 1 1 13.7 4.5 Z M11.5 10.5 H13.7 A2.2 2.2 0 1 1 11.5 12.7 Z M5.5 10.5 V12.7 A2.2 2.2 0 1 1 3.3 10.5 Z"/></g></svg>D</div><svg style="position:absolute;left:185px;top:877.3700000000001px;" width="25" height="23" viewBox="0 0 25 23"><path d="M8 22 L16 1" stroke="#a9abad" stroke-width="1.4"/><path d="M23 7.5 H13.5 M16.5 4.5 L13 7.5 L16.5 10.5" stroke="#5082d2" stroke-width="2.3" fill="none"/><path d="M2 15.5 H11.5 M8.5 12.5 L12 15.5 L8.5 18.5" stroke="#5082d2" stroke-width="2.3" fill="none"/></svg><div style="position:absolute;left:179px;top:911.4800000000001px;width:475px;height:2px;background:#58595b;"></div><div style="position:absolute;left:217.5px;top:925.13px;font-size:21.7px;line-height:21.7px;color:#c9cbcc;font-weight:normal;white-space:pre;-webkit-text-stroke:0.55px #c9cbcc;">Open Module Settings</div><div style="position:absolute;left:429px;width:200px;top:923.2400000000001px;text-align:right;font-size:21.7px;line-height:21.7px;color:#c9cbcc;white-space:pre;-webkit-text-stroke:0.55px #c9cbcc"><svg width="17.0" height="15.0" viewBox="0 0 17 15" style="display:inline-block;vertical-align:0;margin:0 0.5px"><g stroke="#c9cbcc" stroke-width="2.15" fill="none"><rect x="5.5" y="4.5" width="6" height="6"/><path d="M5.5 4.5 H3.3 A2.2 2.2 0 1 1 5.5 2.3 Z M11.5 4.5 V2.3 A2.2 2.2 0 1 1 13.7 4.5 Z M11.5 10.5 H13.7 A2.2 2.2 0 1 1 11.5 12.7 Z M5.5 10.5 V12.7 A2.2 2.2 0 1 1 3.3 10.5 Z"/></g></svg><svg width="15.0" height="16.0" viewBox="0 0 15 16" style="display:inline-block;vertical-align:-1.0px;margin:0 0.5px"><path d="M7.5 0.5 V14.5 M2 9 L7.5 14.5 L13 9" stroke="#c9cbcc" stroke-width="2.15" fill="none"/></svg></div><div style="position:absolute;left:217.5px;top:953.75px;font-size:21.7px;line-height:21.7px;color:#c9cbcc;font-weight:normal;white-space:pre;-webkit-text-stroke:0.55px #c9cbcc;">Load/Unload Modules...</div><div style="position:absolute;left:217.5px;top:982.37px;font-size:21.7px;line-height:21.7px;color:#c9cbcc;font-weight:normal;white-space:pre;-webkit-text-stroke:0.55px #c9cbcc;">Mark Directory as</div><svg style="position:absolute;left:626px;top:986.8300000000002px;" width="10" height="12" viewBox="0 0 10 12"><path d="M0 0 L10 6 L0 12 Z" fill="#c4c4c4"/></svg><div style="position:absolute;left:217.5px;top:1010.99px;font-size:21.7px;line-height:21.7px;color:#c9cbcc;font-weight:normal;white-space:pre;-webkit-text-stroke:0.55px #c9cbcc;">Remove BOM</div><div style="position:absolute;left:179px;top:1043.5600000000002px;width:475px;height:2px;background:#58595b;"></div><div style="position:absolute;left:217.5px;top:1057.21px;font-size:21.7px;line-height:21.7px;color:#c9cbcc;font-weight:normal;white-space:pre;-webkit-text-stroke:0.55px #c9cbcc;">Create Gist...</div><svg style="position:absolute;left:185px;top:1056.67px;" width="22" height="22" viewBox="0 0 22 22"><circle cx="11" cy="11" r="9" fill="none" stroke="#dfe7f2" stroke-width="2.6"/><path d="M6.7 5.3 L8.8 7 Q11 6.5 13.2 7 L15.3 5.3 Q16.1 7.5 15.8 9.3 Q16.5 11 15.5 12.8 Q14.3 14 12.8 14.2 Q13.3 15 13.3 16.5 V20.5 H8.7 V16.5 Q8.7 15 9.2 14.2 Q7.7 14 6.5 12.8 Q5.5 11 6.2 9.3 Q5.9 7.5 6.7 5.3 Z" fill="#dfe7f2"/></svg><div style="position:absolute;left:179px;top:1089.78px;width:475px;height:2px;background:#58595b;"></div><div style="position:absolute;left:217.5px;top:1103.43px;font-size:21.7px;line-height:21.7px;color:#c9cbcc;font-weight:normal;white-space:pre;-webkit-text-stroke:0.55px #c9cbcc;">Convert Java File to Kotlin File</div><div style="position:absolute;left:429px;width:200px;top:1101.54px;text-align:right;font-size:21.7px;line-height:21.7px;color:#c9cbcc;white-space:pre;-webkit-text-stroke:0.55px #c9cbcc"><svg width="17.0" height="15.0" viewBox="0 0 17 15" style="display:inline-block;vertical-align:0;margin:0 0.5px"><path d="M0.5 1.5 H5.5 L11.5 13.5 H16.5 M10 1.5 H16.5" stroke="#c9cbcc" stroke-width="2.15" fill="none"/></svg><svg width="17.0" height="15.0" viewBox="0 0 17 15" style="display:inline-block;vertical-align:0;margin:0 0.5px"><path d="M8.5 1.2 L15.5 8 H11.7 V14 H5.3 V8 H1.5 Z" stroke="#c9cbcc" stroke-width="2.15" fill="none" stroke-linejoin="round"/></svg><svg width="17.0" height="15.0" viewBox="0 0 17 15" style="display:inline-block;vertical-align:0;margin:0 0.5px"><g stroke="#c9cbcc" stroke-width="2.15" fill="none"><rect x="5.5" y="4.5" width="6" height="6"/><path d="M5.5 4.5 H3.3 A2.2 2.2 0 1 1 5.5 2.3 Z M11.5 4.5 V2.3 A2.2 2.2 0 1 1 13.7 4.5 Z M11.5 10.5 H13.7 A2.2 2.2 0 1 1 11.5 12.7 Z M5.5 10.5 V12.7 A2.2 2.2 0 1 1 3.3 10.5 Z"/></g></svg>K</div><div style="position:absolute;left:656px;top:200px;width:345px;height:890px;background:rgba(0,0,0,0.22);filter:blur(3px)"></div><div style="position:absolute;left:656px;top:196px;width:340px;height:881px;background:#464849;"></div><div style="position:absolute;left:654px;top:196px;width:1.5px;height:881px;background:#3a3b3d;"></div><div style="position:absolute;left:696px;top:204.25px;font-size:21.7px;line-height:21.7px;color:#c9cbcc;font-weight:normal;white-space:pre;-webkit-text-stroke:0.55px #c9cbcc;">Module</div><svg style="position:absolute;left:666px;top:203.71px;" width="21" height="16" viewBox="0 0 21 16"><path d="M0 1 H8 L10 3 H21 V16 H0 Z" fill="#a2a4a6"/></svg><div style="position:absolute;left:678px;top:215.71px;width:11px;height:10px;background:#7fa0d0;border:1px solid #3d5f98"></div><div style="position:absolute;left:696px;top:232.87px;font-size:21.7px;line-height:21.7px;color:#c9cbcc;font-weight:normal;white-space:pre;-webkit-text-stroke:0.55px #c9cbcc;">Android Resource File</div><svg style="position:absolute;left:669px;top:231.33px;" width="14" height="19" viewBox="0 0 14 19"><path d="M0 5 L5 0 H14 V19 H0 Z" fill="#a2a4a6"/></svg><div style="position:absolute;left:666px;top:244.33px;width:23px;height:10px;background:#b87a3a;border-radius:2px"></div><div style="position:absolute;left:696px;top:261.49px;font-size:21.7px;line-height:21.7px;color:#c9cbcc;font-weight:normal;white-space:pre;-webkit-text-stroke:0.55px #c9cbcc;">Android Resource Directory</div><svg style="position:absolute;left:666px;top:263.95px;" width="22" height="16" viewBox="0 0 22 16"><path d="M0 1 H8 L10 3 H22 V16 H0 Z" fill="#a2a4a6"/></svg><div style="position:absolute;left:663px;top:284.76px;width:333px;height:30.62px;background:linear-gradient(90deg,#40454f,#3e4659 45%,#3e4e6a 80%,#3e4d68);"></div><div style="position:absolute;left:696px;top:290.11px;font-size:21.7px;line-height:21.7px;color:#c9cbcc;font-weight:normal;white-space:pre;-webkit-text-stroke:0.55px #c9cbcc;">Sample Data Directory</div><svg style="position:absolute;left:666px;top:292.57px;" width="22" height="16" viewBox="0 0 22 16"><path d="M0 1 H8 L10 3 H22 V16 H0 Z" fill="#a2a4a6"/></svg><div style="position:absolute;left:696px;top:318.73px;font-size:21.7px;line-height:21.7px;color:#c9cbcc;font-weight:normal;white-space:pre;-webkit-text-stroke:0.55px #c9cbcc;">File</div><svg style="position:absolute;left:669px;top:319.19px;" width="14" height="19" viewBox="0 0 14 19"><path d="M0 5 L5 0 H14 V19 H0 Z" fill="#a2a4a6"/><rect x="3" y="8" width="8" height="1.6" fill="#46484a"/><rect x="3" y="11" width="8" height="1.6" fill="#46484a"/><rect x="3" y="14" width="6" height="1.6" fill="#46484a"/></svg><div style="position:absolute;left:696px;top:347.35px;font-size:21.7px;line-height:21.7px;color:#c9cbcc;font-weight:normal;white-space:pre;-webkit-text-stroke:0.55px #c9cbcc;">Scratch File</div><div style="position:absolute;left:767px;width:200px;top:345.46px;text-align:right;font-size:21.7px;line-height:21.7px;color:#c9cbcc;white-space:pre;-webkit-text-stroke:0.55px #c9cbcc"><svg width="17.0" height="15.0" viewBox="0 0 17 15" style="display:inline-block;vertical-align:0;margin:0 0.5px"><path d="M8.5 1.2 L15.5 8 H11.7 V14 H5.3 V8 H1.5 Z" stroke="#c9cbcc" stroke-width="2.15" fill="none" stroke-linejoin="round"/></svg><svg width="17.0" height="15.0" viewBox="0 0 17 15" style="display:inline-block;vertical-align:0;margin:0 0.5px"><g stroke="#c9cbcc" stroke-width="2.15" fill="none"><rect x="5.5" y="4.5" width="6" height="6"/><path d="M5.5 4.5 H3.3 A2.2 2.2 0 1 1 5.5 2.3 Z M11.5 4.5 V2.3 A2.2 2.2 0 1 1 13.7 4.5 Z M11.5 10.5 H13.7 A2.2 2.2 0 1 1 11.5 12.7 Z M5.5 10.5 V12.7 A2.2 2.2 0 1 1 3.3 10.5 Z"/></g></svg>N</div><svg style="position:absolute;left:669px;top:348.81px;" width="14" height="19" viewBox="0 0 14 19"><path d="M0 5 L5 0 H14 V19 H0 Z" fill="#a2a4a6"/><rect x="3" y="8" width="8" height="1.6" fill="#46484a"/><rect x="3" y="11" width="8" height="1.6" fill="#46484a"/><rect x="3" y="14" width="6" height="1.6" fill="#46484a"/></svg><svg style="position:absolute;left:677px;top:344.81px;" width="11" height="11" viewBox="0 0 11 11"><circle cx="5.5" cy="5.5" r="5" fill="#5f8fd8"/><path d="M5.5 2.5 V5.5 H8" stroke="#dfe7f2" stroke-width="1.2" fill="none"/></svg><div style="position:absolute;left:696px;top:375.97px;font-size:21.7px;line-height:21.7px;color:#c9cbcc;font-weight:normal;white-space:pre;-webkit-text-stroke:0.55px #c9cbcc;">Directory</div><svg style="position:absolute;left:666px;top:378.43px;" width="22" height="16" viewBox="0 0 22 16"><path d="M0 1 H8 L10 3 H22 V16 H0 Z" fill="#a2a4a6"/></svg><div style="position:absolute;left:658px;top:408.39px;width:336px;height:2px;background:#58595b;"></div><div style="position:absolute;left:696px;top:421.89px;font-size:21.7px;line-height:21.7px;color:#c9cbcc;font-weight:normal;white-space:pre;-webkit-text-stroke:0.55px #c9cbcc;">C++ Class</div><svg style="position:absolute;left:666px;top:421.35px;" width="22" height="22" viewBox="0 0 22 22"><rect x="0" y="0" width="22" height="22" rx="4" fill="#8fa9cf"/><text x="11" y="16" font-size="13" text-anchor="middle" fill="#3d5f98" font-family="Liberation Sans">S</text></svg><div style="position:absolute;left:696px;top:450.51px;font-size:21.7px;line-height:21.7px;color:#c9cbcc;font-weight:normal;white-space:pre;-webkit-text-stroke:0.55px #c9cbcc;">C/C++ Source File</div><svg style="position:absolute;left:669px;top:448.97px;" width="14" height="19" viewBox="0 0 14 19"><path d="M0 5 L5 0 H14 V19 H0 Z" fill="#a2a4a6"/></svg><svg style="position:absolute;left:666px;top:461.97px;" width="23" height="11" viewBox="0 0 23 11"><rect width="23" height="11" fill="#6d8fc2"/><text x="11.5" y="9.5" font-size="9.5" text-anchor="middle" fill="#e6ecf4" font-family="Liberation Sans">C++</text></svg><div style="position:absolute;left:696px;top:479.13px;font-size:21.7px;line-height:21.7px;color:#c9cbcc;font-weight:normal;white-space:pre;-webkit-text-stroke:0.55px #c9cbcc;">C/C++ Header File</div><svg style="position:absolute;left:669px;top:477.59000000000003px;" width="14" height="19" viewBox="0 0 14 19"><path d="M0 5 L5 0 H14 V19 H0 Z" fill="#a2a4a6"/></svg><svg style="position:absolute;left:666px;top:490.59000000000003px;" width="23" height="11" viewBox="0 0 23 11"><rect width="23" height="11" fill="#b87a3a"/><text x="6" y="9.5" font-size="9.5" fill="#e6ecf4" font-family="Liberation Sans">H</text></svg><div style="position:absolute;left:658px;top:511.55000000000007px;width:336px;height:2px;background:#58595b;"></div><div style="position:absolute;left:656px;top:521.2px;width:340px;height:28.62px;background:#3f69b3;"></div><div style="position:absolute;left:696px;top:525.05px;font-size:21.7px;line-height:21.7px;color:#eef2f8;font-weight:normal;white-space:pre;-webkit-text-stroke:0.55px #eef2f8;">Image Asset</div><svg style="position:absolute;left:666px;top:526.51px;" width="22" height="15" viewBox="0 0 22 15"><path d="M1 14 A10 10 0 0 1 21 14 Z" fill="#5fbf83"/><path d="M5 2 L8 7 M17 2 L14 7" stroke="#5fbf83" stroke-width="1.6"/><circle cx="7" cy="10.5" r="1.1" fill="#46484a"/><circle cx="15" cy="10.5" r="1.1" fill="#46484a"/></svg><div style="position:absolute;left:696px;top:553.67px;font-size:21.7px;line-height:21.7px;color:#c9cbcc;font-weight:normal;white-space:pre;-webkit-text-stroke:0.55px #c9cbcc;">Vector Asset</div><svg style="position:absolute;left:666px;top:555.13px;" width="22" height="15" viewBox="0 0 22 15"><path d="M1 14 A10 10 0 0 1 21 14 Z" fill="#5fbf83"/><path d="M5 2 L8 7 M17 2 L14 7" stroke="#5fbf83" stroke-width="1.6"/><circle cx="7" cy="10.5" r="1.1" fill="#46484a"/><circle cx="15" cy="10.5" r="1.1" fill="#46484a"/></svg><div style="position:absolute;left:658px;top:586.09px;width:336px;height:2px;background:#58595b;"></div><div style="position:absolute;left:696px;top:599.59px;font-size:21.7px;line-height:21.7px;color:#c9cbcc;font-weight:normal;white-space:pre;-webkit-text-stroke:0.55px #c9cbcc;">Kotlin Script</div><svg style="position:absolute;left:666px;top:598.05px;" width="24" height="24" viewBox="0 0 24 24"><path d="M2 0 H16 Q18 0 18 4 V14 H2 Z" fill="#a2a4a6"/><path d="M2 14 V22 H8 V14 Z" fill="#a2a4a6"/><path d="M10 12 H24 V24 H10 Z" fill="#4b4d4f"/><path d="M12 23 L22 13 L22 23 Z" fill="#5085c9"/><path d="M15 16 L22 13 L18 20 Z" fill="#e19a4a"/></svg><div style="position:absolute;left:696px;top:628.21px;font-size:21.7px;line-height:21.7px;color:#c9cbcc;font-weight:normal;white-space:pre;-webkit-text-stroke:0.55px #c9cbcc;">Kotlin Worksheet</div><svg style="position:absolute;left:666px;top:626.67px;" width="24" height="24" viewBox="0 0 24 24"><path d="M2 0 H16 Q18 0 18 4 V14 H2 Z" fill="#a2a4a6"/><path d="M2 14 V22 H8 V14 Z" fill="#a2a4a6"/><path d="M10 12 H24 V24 H10 Z" fill="#4b4d4f"/><path d="M12 23 L22 13 L22 23 Z" fill="#5085c9"/><path d="M15 16 L22 13 L18 20 Z" fill="#e19a4a"/></svg><div style="position:absolute;left:658px;top:660.63px;width:336px;height:2px;background:#58595b;"></div><div style="position:absolute;left:696px;top:674.13px;font-size:21.7px;line-height:21.7px;color:#c9cbcc;font-weight:normal;white-space:pre;-webkit-text-stroke:0.55px #c9cbcc;">Activity</div><svg style="position:absolute;left:967px;top:678.5899999999999px;" width="10" height="12" viewBox="0 0 10 12"><path d="M0 0 L10 6 L0 12 Z" fill="#c4c4c4"/></svg><svg style="position:absolute;left:666px;top:675.5899999999999px;" width="22" height="15" viewBox="0 0 22 15"><path d="M1 14 A10 10 0 0 1 21 14 Z" fill="#5fbf83"/><path d="M5 2 L8 7 M17 2 L14 7" stroke="#5fbf83" stroke-width="1.6"/><circle cx="7" cy="10.5" r="1.1" fill="#46484a"/><circle cx="15" cy="10.5" r="1.1" fill="#46484a"/></svg><div style="position:absolute;left:696px;top:702.75px;font-size:21.7px;line-height:21.7px;color:#c9cbcc;font-weight:normal;white-space:pre;-webkit-text-stroke:0.55px #c9cbcc;">Fragment</div><svg style="position:absolute;left:967px;top:707.2099999999999px;" width="10" height="12" viewBox="0 0 10 12"><path d="M0 0 L10 6 L0 12 Z" fill="#c4c4c4"/></svg><svg style="position:absolute;left:666px;top:704.2099999999999px;" width="22" height="15" viewBox="0 0 22 15"><path d="M1 14 A10 10 0 0 1 21 14 Z" fill="#5fbf83"/><path d="M5 2 L8 7 M17 2 L14 7" stroke="#5fbf83" stroke-width="1.6"/><circle cx="7" cy="10.5" r="1.1" fill="#46484a"/><circle cx="15" cy="10.5" r="1.1" fill="#46484a"/></svg><div style="position:absolute;left:696px;top:731.37px;font-size:21.7px;line-height:21.7px;color:#c9cbcc;font-weight:normal;white-space:pre;-webkit-text-stroke:0.55px #c9cbcc;">Folder</div><svg style="position:absolute;left:967px;top:735.8299999999999px;" width="10" height="12" viewBox="0 0 10 12"><path d="M0 0 L10 6 L0 12 Z" fill="#c4c4c4"/></svg><svg style="position:absolute;left:666px;top:732.8299999999999px;" width="22" height="15" viewBox="0 0 22 15"><path d="M1 14 A10 10 0 0 1 21 14 Z" fill="#5fbf83"/><path d="M5 2 L8 7 M17 2 L14 7" stroke="#5fbf83" stroke-width="1.6"/><circle cx="7" cy="10.5" r="1.1" fill="#46484a"/><circle cx="15" cy="10.5" r="1.1" fill="#46484a"/></svg><div style="position:absolute;left:696px;top:759.99px;font-size:21.7px;line-height:21.7px;color:#c9cbcc;font-weight:normal;white-space:pre;-webkit-text-stroke:0.55px #c9cbcc;">Service</div><svg style="position:absolute;left:967px;top:764.4499999999999px;" width="10" height="12" viewBox="0 0 10 12"><path d="M0 0 L10 6 L0 12 Z" fill="#c4c4c4"/></svg><svg style="position:absolute;left:666px;top:761.4499999999999px;" width="22" height="15" viewBox="0 0 22 15"><path d="M1 14 A10 10 0 0 1 21 14 Z" fill="#5fbf83"/><path d="M5 2 L8 7 M17 2 L14 7" stroke="#5fbf83" stroke-width="1.6"/><circle cx="7" cy="10.5" r="1.1" fill="#46484a"/><circle cx="15" cy="10.5" r="1.1" fill="#46484a"/></svg><div style="position:absolute;left:696px;top:788.61px;font-size:21.7px;line-height:21.7px;color:#c9cbcc;font-weight:normal;white-space:pre;-webkit-text-stroke:0.55px #c9cbcc;">UiComponent</div><svg style="position:absolute;left:967px;top:793.0699999999999px;" width="10" height="12" viewBox="0 0 10 12"><path d="M0 0 L10 6 L0 12 Z" fill="#c4c4c4"/></svg><svg style="position:absolute;left:666px;top:790.0699999999999px;" width="22" height="15" viewBox="0 0 22 15"><path d="M1 14 A10 10 0 0 1 21 14 Z" fill="#5fbf83"/><path d="M5 2 L8 7 M17 2 L14 7" stroke="#5fbf83" stroke-width="1.6"/><circle cx="7" cy="10.5" r="1.1" fill="#46484a"/><circle cx="15" cy="10.5" r="1.1" fill="#46484a"/></svg><div style="position:absolute;left:696px;top:817.23px;font-size:21.7px;line-height:21.7px;color:#c9cbcc;font-weight:normal;white-space:pre;-webkit-text-stroke:0.55px #c9cbcc;">Automotive</div><svg style="position:absolute;left:967px;top:821.6899999999999px;" width="10" height="12" viewBox="0 0 10 12"><path d="M0 0 L10 6 L0 12 Z" fill="#c4c4c4"/></svg><svg style="position:absolute;left:666px;top:818.6899999999999px;" width="22" height="15" viewBox="0 0 22 15"><path d="M1 14 A10 10 0 0 1 21 14 Z" fill="#5fbf83"/><path d="M5 2 L8 7 M17 2 L14 7" stroke="#5fbf83" stroke-width="1.6"/><circle cx="7" cy="10.5" r="1.1" fill="#46484a"/><circle cx="15" cy="10.5" r="1.1" fill="#46484a"/></svg><div style="position:absolute;left:696px;top:845.85px;font-size:21.7px;line-height:21.7px;color:#c9cbcc;font-weight:normal;white-space:pre;-webkit-text-stroke:0.55px #c9cbcc;">XML</div><svg style="position:absolute;left:967px;top:850.31px;" width="10" height="12" viewBox="0 0 10 12"><path d="M0 0 L10 6 L0 12 Z" fill="#c4c4c4"/></svg><svg style="position:absolute;left:666px;top:847.31px;" width="22" height="15" viewBox="0 0 22 15"><path d="M1 14 A10 10 0 0 1 21 14 Z" fill="#5fbf83"/><path d="M5 2 L8 7 M17 2 L14 7" stroke="#5fbf83" stroke-width="1.6"/><circle cx="7" cy="10.5" r="1.1" fill="#46484a"/><circle cx="15" cy="10.5" r="1.1" fill="#46484a"/></svg><div style="position:absolute;left:696px;top:874.47px;font-size:21.7px;line-height:21.7px;color:#c9cbcc;font-weight:normal;white-space:pre;-webkit-text-stroke:0.55px #c9cbcc;">Wear</div><svg style="position:absolute;left:967px;top:878.93px;" width="10" height="12" viewBox="0 0 10 12"><path d="M0 0 L10 6 L0 12 Z" fill="#c4c4c4"/></svg><svg style="position:absolute;left:666px;top:875.93px;" width="22" height="15" viewBox="0 0 22 15"><path d="M1 14 A10 10 0 0 1 21 14 Z" fill="#5fbf83"/><path d="M5 2 L8 7 M17 2 L14 7" stroke="#5fbf83" stroke-width="1.6"/><circle cx="7" cy="10.5" r="1.1" fill="#46484a"/><circle cx="15" cy="10.5" r="1.1" fill="#46484a"/></svg><div style="position:absolute;left:696px;top:903.09px;font-size:21.7px;line-height:21.7px;color:#c9cbcc;font-weight:normal;white-space:pre;-webkit-text-stroke:0.55px #c9cbcc;">AIDL</div><svg style="position:absolute;left:967px;top:907.55px;" width="10" height="12" viewBox="0 0 10 12"><path d="M0 0 L10 6 L0 12 Z" fill="#c4c4c4"/></svg><svg style="position:absolute;left:666px;top:904.55px;" width="22" height="15" viewBox="0 0 22 15"><path d="M1 14 A10 10 0 0 1 21 14 Z" fill="#5fbf83"/><path d="M5 2 L8 7 M17 2 L14 7" stroke="#5fbf83" stroke-width="1.6"/><circle cx="7" cy="10.5" r="1.1" fill="#46484a"/><circle cx="15" cy="10.5" r="1.1" fill="#46484a"/></svg><div style="position:absolute;left:696px;top:931.71px;font-size:21.7px;line-height:21.7px;color:#c9cbcc;font-weight:normal;white-space:pre;-webkit-text-stroke:0.55px #c9cbcc;">Widget</div><svg style="position:absolute;left:967px;top:936.17px;" width="10" height="12" viewBox="0 0 10 12"><path d="M0 0 L10 6 L0 12 Z" fill="#c4c4c4"/></svg><svg style="position:absolute;left:666px;top:933.17px;" width="22" height="15" viewBox="0 0 22 15"><path d="M1 14 A10 10 0 0 1 21 14 Z" fill="#5fbf83"/><path d="M5 2 L8 7 M17 2 L14 7" stroke="#5fbf83" stroke-width="1.6"/><circle cx="7" cy="10.5" r="1.1" fill="#46484a"/><circle cx="15" cy="10.5" r="1.1" fill="#46484a"/></svg><div style="position:absolute;left:696px;top:960.33px;font-size:21.7px;line-height:21.7px;color:#c9cbcc;font-weight:normal;white-space:pre;-webkit-text-stroke:0.55px #c9cbcc;">Google</div><svg style="position:absolute;left:967px;top:964.79px;" width="10" height="12" viewBox="0 0 10 12"><path d="M0 0 L10 6 L0 12 Z" fill="#c4c4c4"/></svg><svg style="position:absolute;left:666px;top:961.79px;" width="22" height="15" viewBox="0 0 22 15"><path d="M1 14 A10 10 0 0 1 21 14 Z" fill="#5fbf83"/><path d="M5 2 L8 7 M17 2 L14 7" stroke="#5fbf83" stroke-width="1.6"/><circle cx="7" cy="10.5" r="1.1" fill="#46484a"/><circle cx="15" cy="10.5" r="1.1" fill="#46484a"/></svg><div style="position:absolute;left:696px;top:988.95px;font-size:21.7px;line-height:21.7px;color:#c9cbcc;font-weight:normal;white-space:pre;-webkit-text-stroke:0.55px #c9cbcc;">Other</div><svg style="position:absolute;left:967px;top:993.41px;" width="10" height="12" viewBox="0 0 10 12"><path d="M0 0 L10 6 L0 12 Z" fill="#c4c4c4"/></svg><svg style="position:absolute;left:666px;top:990.41px;" width="22" height="15" viewBox="0 0 22 15"><path d="M1 14 A10 10 0 0 1 21 14 Z" fill="#5fbf83"/><path d="M5 2 L8 7 M17 2 L14 7" stroke="#5fbf83" stroke-width="1.6"/><circle cx="7" cy="10.5" r="1.1" fill="#46484a"/><circle cx="15" cy="10.5" r="1.1" fill="#46484a"/></svg><div style="position:absolute;left:696px;top:1017.57px;font-size:21.7px;line-height:21.7px;color:#c9cbcc;font-weight:normal;white-space:pre;-webkit-text-stroke:0.55px #c9cbcc;">EditorConfig File</div><svg style="position:absolute;left:667px;top:1017.03px;" width="21" height="21" viewBox="0 0 21 21"><circle cx="10.5" cy="10.5" r="6.8" fill="none" stroke="#a2a4a6" stroke-width="5" stroke-dasharray="3.3 2"/><circle cx="10.5" cy="10.5" r="5" fill="none" stroke="#a2a4a6" stroke-width="3"/></svg><div style="position:absolute;left:696px;top:1046.19px;font-size:21.7px;line-height:21.7px;color:#c9cbcc;font-weight:normal;white-space:pre;-webkit-text-stroke:0.55px #c9cbcc;">Resource Bundle</div><svg style="position:absolute;left:669px;top:1045.6499999999999px;" width="14" height="19" viewBox="0 0 14 19"><path d="M0 5 L5 0 H14 V19 H0 Z" fill="#a2a4a6"/></svg><svg style="position:absolute;left:675px;top:1055.6499999999999px;" width="14" height="12" viewBox="0 0 14 12"><rect x="1" y="4" width="3" height="8" fill="#c9a03a"/><rect x="5.5" y="0" width="3" height="12" fill="#c9a03a"/><rect x="10" y="6" width="3" height="6" fill="#c9a03a"/></svg><svg style="position:absolute;left:784px;top:532px;" width="18" height="26" viewBox="0 0 18 26"><path d="M2 2 L2 19 L6 15.5 L9.5 23 L12.5 22 L9 14.5 L14.5 14.5 Z" fill="#151a20" stroke="#c8ccd0" stroke-width="1.5" stroke-linejoin="round"/></svg><svg style="position:absolute;left:1650px;top:3px;" width="26" height="24" viewBox="0 0 26 24"><path d="M2 9 L9 2 L13 5 L6 12 Z" fill="#807f70"/><path d="M9 6 L24 21 L21 23 L6 9 Z" fill="#807f70"/></svg><div style="position:absolute;left:1692px;top:-4px;width:111px;height:35px;background:transparent;border:2px solid #4a4c4e;border-radius:5px;box-sizing:border-box"></div><svg style="position:absolute;left:1708px;top:7px;" width="22" height="15" viewBox="0 0 22 15"><path d="M1 14 A10 10 0 0 1 21 14 Z" fill="#8aa89a"/><path d="M5 2 L8 7 M17 2 L14 7" stroke="#8aa89a" stroke-width="1.6"/><circle cx="7" cy="10.5" r="1.1" fill="#46484a"/><circle cx="15" cy="10.5" r="1.1" fill="#46484a"/></svg><div style="position:absolute;left:1735px;top:7.06px;font-size:17.5px;line-height:17.5px;color:#a9abad;font-weight:normal;white-space:pre;-webkit-text-stroke:0.55px #a9abad;">app</div><svg style="position:absolute;left:1777px;top:12px;" width="13" height="7" viewBox="0 0 13 7"><path d="M0 0 H13 L6.5 7 Z" fill="#8f9193"/></svg><div style="position:absolute;left:1814px;top:-4px;width:191px;height:35px;background:transparent;border:2px solid #4a4c4e;border-radius:5px;box-sizing:border-box"></div><svg style="position:absolute;left:1832px;top:5px;" width="20" height="24" viewBox="0 0 20 24"><rect x="1" y="1" width="11" height="20" rx="2" stroke="#9a9c9e" stroke-width="2" fill="none"/><rect x="10" y="14" width="9" height="7" stroke="#9a9c9e" stroke-width="1.6" fill="#3a3c3e"/><rect x="9" y="22" width="11" height="1.6" fill="#9a9c9e"/></svg><div style="position:absolute;left:1857px;top:7.02px;font-size:17.6px;line-height:17.6px;color:#a9abad;font-weight:normal;white-space:pre;-webkit-text-stroke:0.55px #a9abad;">Pixel 4 API 29</div><svg style="position:absolute;left:1978px;top:14px;" width="13" height="7" viewBox="0 0 13 7"><path d="M0 0 H13 L6.5 7 Z" fill="#a5a7a9"/></svg><svg style="position:absolute;left:2025px;top:6px;" width="16" height="20" viewBox="0 0 16 20"><path d="M0 0 L16 10 L0 20 Z" fill="#60644f"/></svg><svg style="position:absolute;left:2058px;top:5px;" width="24" height="24" viewBox="0 0 24 24"><path d="M15 5 A8 8 0 1 0 19 14" stroke="#4e5052" stroke-width="3" fill="none"/><path d="M13 1 L21 4 L16 10 Z" fill="#4e5052"/></svg><svg style="position:absolute;left:2100px;top:7px;" width="22" height="20" viewBox="0 0 22 20"><path d="M0 2 H18 M0 7 H18 M0 12 H14 M0 17 H12" stroke="#535557" stroke-width="2.5"/></svg><svg style="position:absolute;left:2138px;top:4px;" width="20" height="24" viewBox="0 0 20 24"><ellipse cx="10" cy="14" rx="7" ry="9" fill="#63654f"/><path d="M2 8 L6 11 M18 8 L14 11 M1 15 H4 M19 15 H16 M6 1 L8 5 M14 1 L12 5" stroke="#63654f" stroke-width="2"/></svg><svg style="position:absolute;left:2176px;top:5px;" width="20" height="24" viewBox="0 0 20 24"><path d="M14 4 A9 9 0 1 0 14 20 L18 18 V6 Z" fill="#48494b"/></svg><svg style="position:absolute;left:2213px;top:8px;" width="26" height="18" viewBox="0 0 26 18"><path d="M3 17 A10 10 0 0 1 19 8" stroke="#45679a" stroke-width="4" fill="none"/><path d="M17 17 L21 8 L24 17 Z" fill="#8a8c8e"/></svg><svg style="position:absolute;left:2255px;top:4px;" width="24" height="26" viewBox="0 0 24 26"><ellipse cx="10" cy="14" rx="7" ry="9" fill="#6c6e5c"/><path d="M2 8 L6 11 M18 8 L14 11 M1 15 H4 M6 1 L8 5 M14 1 L12 5" stroke="#6c6e5c" stroke-width="2"/><path d="M13 24 L22 15 M16 14 H23 V21" stroke="#c9cbcd" stroke-width="2.5" fill="none"/></svg><div style="position:absolute;left:2296px;top:7px;width:17px;height:17px;background:#444547;"></div><div style="position:absolute;left:2329px;top:4px;width:1px;height:28px;background:#444648;"></div><div style="position:absolute;left:2342px;top:6.68px;font-size:18.3px;line-height:18.3px;color:#a3a5a7;font-weight:normal;white-space:pre;-webkit-text-stroke:0.55px #a3a5a7;">Git:</div><svg style="position:absolute;left:2387px;top:6px;" width="22" height="22" viewBox="0 0 22 22"><path d="M20 3 L6 17" stroke="#4a6fab" stroke-width="3.6"/><path d="M3.5 9 V19 H13.5" stroke="#4a6fab" stroke-width="3.6" fill="none"/></svg><svg style="position:absolute;left:2427px;top:7px;" width="24" height="20" viewBox="0 0 24 20"><path d="M2 10 L9 17 L22 3" stroke="#55575a" stroke-width="3" fill="none"/></svg><svg style="position:absolute;left:2466px;top:6px;" width="22" height="22" viewBox="0 0 22 22"><path d="M3 19 L17 5" stroke="#5a5b50" stroke-width="2.5"/><path d="M8 4 H18 V14" stroke="#5a5b50" stroke-width="2.5" fill="none"/></svg><svg style="position:absolute;left:2503px;top:4px;" width="24" height="24" viewBox="0 0 24 24"><circle cx="12" cy="12" r="10" stroke="#9a9c9e" stroke-width="2.2" fill="none"/><path d="M12 6 V12 L16 15" stroke="#9a9c9e" stroke-width="2.2" fill="none"/></svg><svg style="position:absolute;left:2543px;top:6px;" width="24" height="22" viewBox="0 0 24 22"><path d="M9 2 L3 8 L9 14" stroke="#9a9c9e" stroke-width="2.4" fill="none"/><path d="M3 8 H14 A6.5 6.5 0 0 1 14 21 H9" stroke="#9a9c9e" stroke-width="2.4" fill="none"/></svg><div style="position:absolute;left:2578px;top:3px;width:1px;height:30px;background:#444648;"></div><svg style="position:absolute;left:2592px;top:7px;" width="21" height="16" viewBox="0 0 21 16"><path d="M0 1 H8 L10 3 H21 V16 H0 Z" fill="#9a9c9e"/></svg><div style="position:absolute;left:2604px;top:17px;width:10px;height:10px;background:#4a6da8;"></div>
</body></html>
